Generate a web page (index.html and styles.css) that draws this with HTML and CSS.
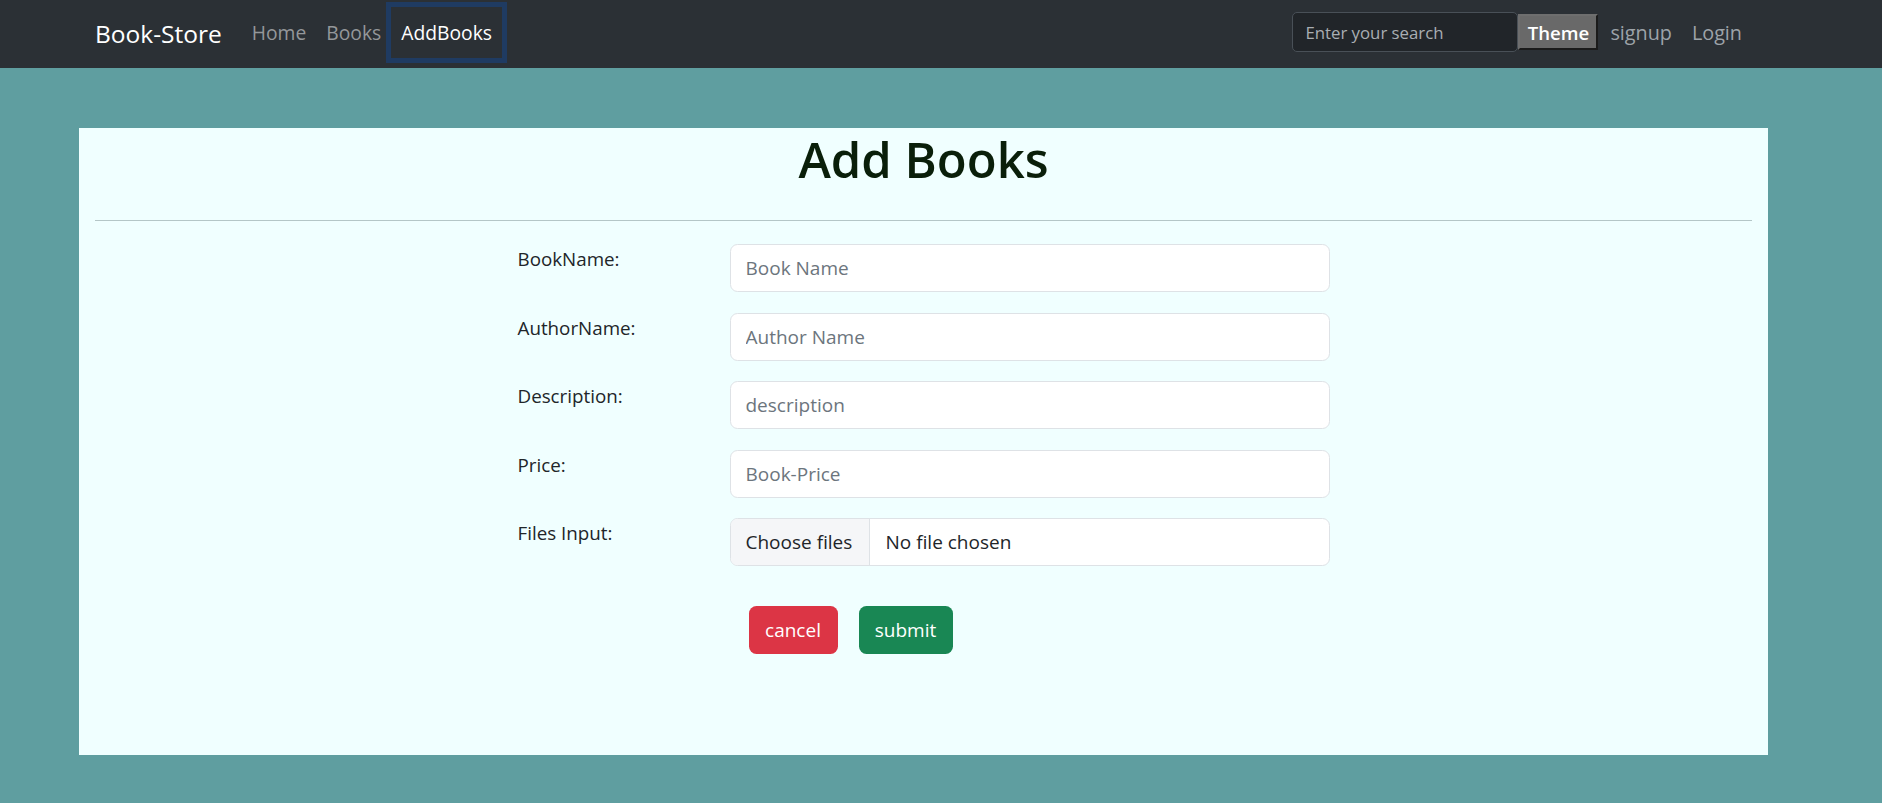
FILE: index.html
```html
<!DOCTYPE html>
<html lang="en">
<head>
<meta charset="utf-8">
<title>Book-Store</title>
<link rel="stylesheet" href="styles.css">
</head>
<body>
<nav class="navbar">
  <div class="nav-left">
    <a class="brand" href="#">Book-Store</a>
    <a class="nav-link" href="#">Home</a>
    <a class="nav-link" href="#">Books</a>
    <a class="nav-link active" href="#">AddBooks</a>
  </div>
  <div class="nav-right">
    <input class="search" type="text" placeholder="Enter your search">
    <button class="theme-btn" type="button">Theme</button>
    <a class="nav-link side" href="#">signup</a>
    <a class="nav-link side" href="#">Login</a>
  </div>
</nav>
<main class="page">
  <section class="card">
    <h1 class="title">Add Books</h1>
    <hr class="divider">
    <form class="book-form">
      <label class="form-label">BookName:</label>
      <input class="form-input" type="text" placeholder="Book Name">
      <label class="form-label">AuthorName:</label>
      <input class="form-input" type="text" placeholder="Author Name">
      <label class="form-label">Description:</label>
      <input class="form-input" type="text" placeholder="description">
      <label class="form-label">Price:</label>
      <input class="form-input" type="text" placeholder="Book-Price">
      <label class="form-label">Files Input:</label>
      <div class="file-input"><span class="file-btn">Choose files</span><span class="file-name">No file chosen</span></div>
      <div class="actions">
        <button class="btn btn-cancel" type="button">cancel</button>
        <button class="btn btn-submit" type="button">submit</button>
      </div>
    </form>
  </section>
</main>
</body>
</html>
```
FILE: styles.css
```css
* { box-sizing: border-box; }
html, body { margin: 0; padding: 0; }
body {
  background: #5f9ea0;
  font-family: "Open Sans", "Noto Sans", sans-serif;
  font-size: 19px;
  color: #212529;
  min-height: 803px;
}
.navbar {
  height: 68px;
  background: #2b3035;
  display: flex;
  align-items: center;
  justify-content: space-between;
  padding: 0 130px 4px 95px;
}
.nav-left, .nav-right { display: flex; align-items: center; }
.brand {
  color: #fff;
  text-decoration: none;
  font-size: 24.5px;
  margin-right: 20px;
  margin-top: 2px;
}
.nav-link {
  color: #94979a;
  text-decoration: none;
  font-size: 19.3px;
  padding: 0 10px;
}
.nav-link.active {
  color: #fff;
  border: 5px solid #1f3b62;
  height: 61px;
  display: flex;
  align-items: center;
  padding: 0 10px;
  margin-top: 0;
  margin-left: -5px;
}
.search {
  width: 226px;
  height: 40px;
  background: #212529;
  border: 1px solid #495057;
  border-radius: 5px;
  color: #dee2e6;
  font-family: inherit;
  font-size: 16.8px;
  padding: 0 12px;
  outline: none;
}
.search::placeholder { color: #a9aeb3; }
.theme-btn {
  height: 36px;
  width: 80px;
  background: #696969;
  color: #fff;
  font-family: inherit;
  font-size: 18.6px;
  font-weight: 600;
  border: 2px solid;
  border-color: #6e6e6e #1b1b1b #1b1b1b #6e6e6e;
  padding: 0;
  margin-right: 2px;
}
.nav-link.side { color: #9da3a9; font-size: 19.8px; }
.page { padding: 60px 114px 48px 79px; }
.card {
  background: #f0ffff;
  height: 627px;
  padding: 0 16px;
}
.title {
  margin: 0 0 10px;
  text-align: center;
  font-size: 49px;
  line-height: 62px;
  font-weight: 600;
  color: #0a1f0a;
}
.divider {
  margin: 30px 0 0;
  border: 0;
  border-top: 1px solid #b4c6c7;
}
.book-form {
  width: 812px;
  margin: 23px auto 0;
  display: grid;
  grid-template-columns: 212px 600px;
  row-gap: 20.5px;
}
.form-label {
  font-size: 18.8px;
  line-height: 30px;
  color: #212529;
}
.form-input, .file-input {
  height: 48px;
  border: 1px solid #dee2e6;
  border-radius: 7.5px;
  background: #fff;
  font-family: inherit;
  font-size: 19px;
  padding: 0 15px;
  color: #212529;
  outline: none;
}
.form-input::placeholder { color: #6c757d; }
.file-input { display: flex; align-items: stretch; padding: 0; overflow: hidden; }
.file-btn {
  display: flex; align-items: center;
  background: #f5f6f8;
  border-right: 1px solid #dee2e6;
  padding: 0 15px;
  width: 139px;
}
.file-name { display: flex; align-items: center; padding-left: 16px; }
.actions {
  grid-column: 2;
  display: flex;
  gap: 21px;
  margin-top: 19px;
  padding-left: 19px;
}
.btn {
  height: 48px;
  border: 0;
  border-radius: 7.5px;
  color: #fff;
  font-family: inherit;
  font-size: 19px;
  padding: 0 16px;
}
.btn-cancel { background: #dc3545; width: 89px; }
.btn-submit { background: #198754; width: 94px; }
```
